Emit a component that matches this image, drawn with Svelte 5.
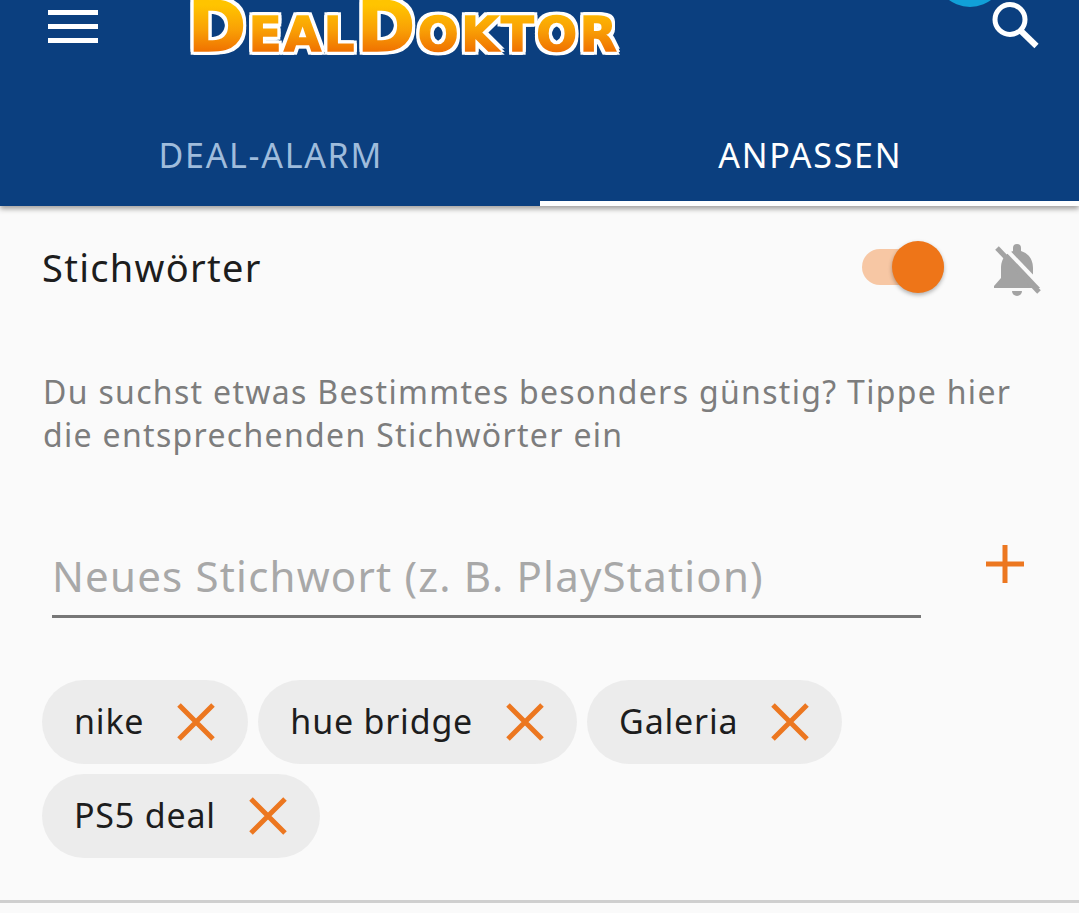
<script lang="ts">
	const tags = ["nike", "hue bridge", "Galeria", "PS5 deal"];
</script>

<div class="screen">
	<header class="header">
		<div class="topbar">
			<button class="icon-btn menu" aria-label="Menü">
				<span></span><span></span><span></span>
			</button>
			<div class="logo"><span class="big">D</span>EAL<span class="big">D</span>OKTOR</div>
			<button class="icon-btn search" aria-label="Suche">
				<svg width="52" height="52" viewBox="0 0 52 52" fill="none" stroke="#fff">
					<circle cx="21" cy="19.500" r="15" stroke-width="5" />
					<path d="M31.500 30.500 L47.500 46" stroke-width="6" />
				</svg>
			</button>
			<span class="badge"></span>
		</div>
		<nav class="tabs">
			<div class="tab">DEAL-ALARM</div>
			<div class="tab active">ANPASSEN</div>
		</nav>
	</header>

	<main class="content">
		<div class="title-row">
			<h1>Stichwörter</h1>
			<div class="switch"><span class="track"></span><span class="thumb"></span></div>
			<svg class="bell" width="50" height="56" viewBox="0 0 50 56">
				<path d="M24 3a4 4 0 0 1 4 4v3c8 2.500 12 9 12 17v10l7 8v2H1v-2l7-8V27c0-8 4-14.500 12-17V7a4 4 0 0 1 4-4z" fill="#a3a3a3" />
				<path d="M19 50h10a5 5 0 0 1-10 0z" fill="#a3a3a3" />
				<path d="M8 3 L50 47" stroke="#fafafa" stroke-width="4" />
				<path d="M4 7 L46 51" stroke="#a3a3a3" stroke-width="5" />
			</svg>
		</div>

		<p class="hint">Du suchst etwas Bestimmtes besonders günstig? Tippe hier die entsprechenden Stichwörter ein</p>

		<div class="add-row">
			<div class="field">Neues Stichwort (z. B. PlayStation)</div>
			<svg class="plus" width="38" height="38" viewBox="0 0 38 38" stroke="#ec7720" stroke-width="5">
				<path d="M0 19H38M19 0V38" />
			</svg>
		</div>

		<div class="chips">
			{#each tags as tag}
				<div class="chip">
					<span>{tag}</span>
					<svg width="38" height="38" viewBox="0 0 38 38" stroke="#ec7720" stroke-width="5">
						<path d="M2 2L36 36M36 2L2 36" />
					</svg>
				</div>
			{/each}
		</div>
	</main>
	<div class="divider"></div>
</div>

<style>
	:global(body) {
		margin: 0;
		background: #fafafa;
	}

	.screen {
		width: 1079px;
		height: 913px;
		overflow: hidden;
		font-family: "Noto Sans", "Open Sans", sans-serif;
		background: #fafafa;
	}

	.header {
		background: #0b3f7f;
		height: 206px;
		box-shadow: 0 3px 5px rgba(60, 55, 50, 0.45);
		position: relative;
		display: flex;
		flex-direction: column;
	}

	.topbar {
		height: 102px;
		position: relative;
		display: flex;
		align-items: flex-start;
	}

	.icon-btn {
		background: none;
		border: 0;
		padding: 0;
	}

	.menu {
		width: 50px;
		margin: 10px 0 0 48px;
		display: flex;
		flex-direction: column;
		gap: 9px;
	}

	.menu span {
		height: 5px;
		background: #fff;
	}

	.logo {
		margin: -3px 0 0 90px;
		height: 66px;
		line-height: 60px;
		font-family: "DejaVu Sans", sans-serif;
		font-weight: 700;
		font-size: 48px;
		letter-spacing: 2.600px;
		white-space: nowrap;
		background: linear-gradient(#ffc400 12%, #f9a005 50%, #ee6a00 88%);
		-webkit-background-clip: text;
		background-clip: text;
		color: transparent;
		-webkit-text-stroke: 1.500px transparent;
		filter: drop-shadow(3px 0 0 #fff) drop-shadow(-3px 0 0 #fff) drop-shadow(0 3px 0 #fff) drop-shadow(0 -3px 0 #fff);
	}

	.big {
		font-size: 70px;
	}

	.search {
		position: absolute;
		left: 989px;
		top: 0;
		line-height: 0;
	}

	.badge {
		position: absolute;
		left: 935px;
		top: -63px;
		width: 70px;
		height: 70px;
		border-radius: 50%;
		background: #11a0d8;
	}

	.tabs {
		flex: 1;
		display: flex;
	}

	.tab {
		flex: 1;
		display: flex;
		align-items: center;
		justify-content: center;
		font-size: 34px;
		letter-spacing: 1.700px;
		color: #9fbcdc;
		padding: 2px 0 0 2px;
	}

	.tab.active {
		color: #fff;
		box-shadow: inset 0 -5px #fff;
	}

	.content {
		padding: 0 0 0 42px;
	}

	.title-row {
		display: flex;
		align-items: center;
		height: 122px;
		padding-right: 36px;
	}

	h1 {
		margin: 0;
		flex: 1;
		font-size: 38px;
		font-weight: 400;
		letter-spacing: 1.300px;
		color: #1d1d1d;
	}

	.switch {
		position: relative;
		width: 82px;
		height: 52px;
		margin-right: 49px;
	}

	.track {
		position: absolute;
		left: 0;
		top: 8px;
		right: 0;
		height: 36px;
		border-radius: 18px;
		background: #f7c7a4;
	}

	.thumb {
		position: absolute;
		right: 0;
		top: 0;
		width: 52px;
		height: 52px;
		border-radius: 50%;
		background: #ee7518;
		box-shadow: 0 2px 4px rgba(0, 0, 0, 0.3);
	}

	.bell {
		margin-top: 3px;
	}

	.hint {
		margin: 0;
		padding: 42px 0 0 1px;
		font-size: 32px;
		line-height: 43px;
		letter-spacing: 1.320px;
		color: #7d7d7d;
		width: 1000px;
	}

	.add-row {
		display: flex;
		align-items: flex-start;
		margin-top: 86px;
	}

	.field {
		width: 869px;
		margin-left: 10px;
		height: 73px;
		line-height: 68px;
		font-size: 42px;
		letter-spacing: 1.200px;
		color: #a8a8a8;
		border-bottom: 3px solid #777;
	}

	.plus {
		margin: 3px 0 0 65px;
	}

	.chips {
		display: flex;
		flex-wrap: wrap;
		gap: 10px;
		margin-top: 62px;
	}

	.chip {
		display: flex;
		align-items: center;
		gap: 33px;
		height: 84px;
		padding: 0 33px;
		border-radius: 42px;
		background: #ececec;
		font-size: 34px;
		letter-spacing: 0.800px;
		color: #1d1d1d;
	}

	.chip span {
		margin: -2px 0 0 -1px;
	}

	.divider {
		height: 3px;
		margin-top: 42px;
		background: #cfcfcf;
	}
</style>
